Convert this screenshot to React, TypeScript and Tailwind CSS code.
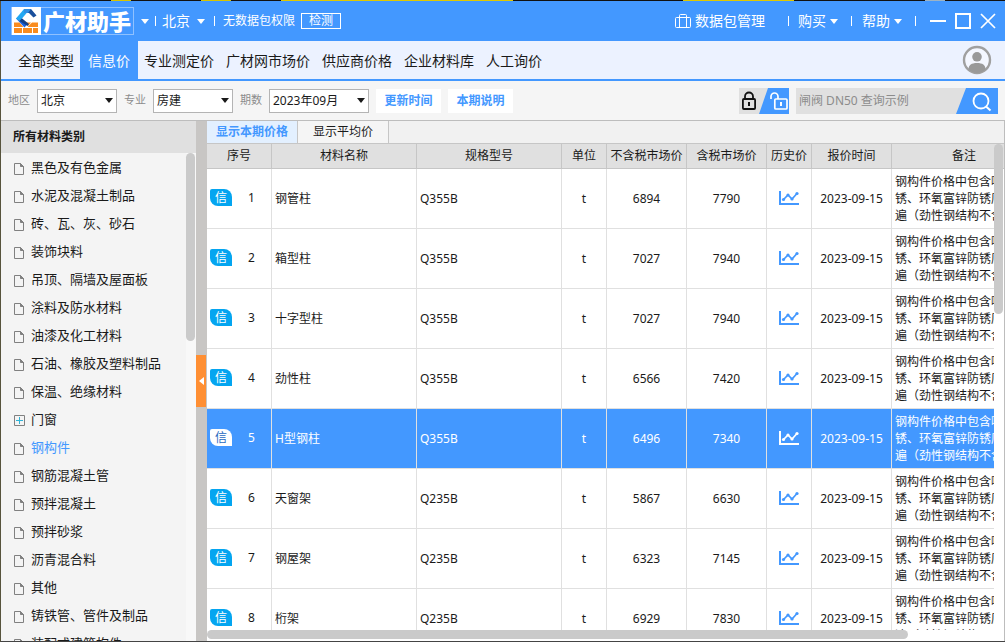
import { useState } from "react";

const categories = [
  "黑色及有色金属",
  "水泥及混凝土制品",
  "砖、瓦、灰、砂石",
  "装饰块料",
  "吊顶、隔墙及屋面板",
  "涂料及防水材料",
  "油漆及化工材料",
  "石油、橡胶及塑料制品",
  "保温、绝缘材料",
  "门窗",
  "钢构件",
  "钢筋混凝土管",
  "预拌混凝土",
  "预拌砂浆",
  "沥青混合料",
  "其他",
  "铸铁管、管件及制品",
  "装配式建筑构件",
];

const remark = "钢构件价格中包含喷砂除锈、环氧富锌防锈底漆两遍（劲性钢结构不含）";

const rows = [
  { id: 1, name: "钢管柱", spec: "Q355B", net: 6894, gross: 7790 },
  { id: 2, name: "箱型柱", spec: "Q355B", net: 7027, gross: 7940 },
  { id: 3, name: "十字型柱", spec: "Q355B", net: 7027, gross: 7940 },
  { id: 4, name: "劲性柱", spec: "Q355B", net: 6566, gross: 7420 },
  { id: 5, name: "H型钢柱", spec: "Q355B", net: 6496, gross: 7340 },
  { id: 6, name: "天窗架", spec: "Q235B", net: 5867, gross: 6630 },
  { id: 7, name: "钢屋架", spec: "Q235B", net: 6323, gross: 7145 },
  { id: 8, name: "桁架", spec: "Q235B", net: 6929, gross: 7830 },
];

const navItems = ["全部类型", "信息价", "专业测定价", "广材网市场价", "供应商价格", "企业材料库", "人工询价"];

const columns = ["序号", "材料名称", "规格型号", "单位", "不含税市场价", "含税市场价", "历史价", "报价时间", "备注"];

function Caret({ className = "" }: { className?: string }) {
  return (
    <svg width="8" height="5" viewBox="0 0 8 5" className={className} aria-hidden="true">
      <path d="M0 0h8L4 5z" fill="currentColor" />
    </svg>
  );
}

function Divider() {
  return <span className="h-2.5 w-px bg-white" />;
}

function Logo() {
  return (
    <svg width="29" height="28" viewBox="0 0 29 28" aria-hidden="true">
      <rect width="29" height="28" fill="#fff" />
      <path d="M2 15.500h5.500l4 4.500H2zM2 21h8v5H2zM11 21h9v5h-9zM21 21h5v5h-5zM20 15.500h6V20H15.500z" fill="#f98b1e" />
      <path d="M13.500 15.500h5.500l-3 3.500z" fill="#f98b1e" />
      <path d="M4 11.500l3.500-2.500 8 8-3 3.500z" fill="#1b62e0" />
      <path d="M12 2h6l-8 9.500L7.500 14 4 11.500z" fill="#22a8f2" />
      <path d="M12 2h7l5.500 6.500-3 2L17 6h-4z" fill="#1a4f9c" />
      <path d="M12 2h7l-3 4h-4z" fill="#2f8fe4" />
      <path d="M10 11.500l7 5.500-1.500 2-8-5z" fill="#123f86" />
    </svg>
  );
}

function FileIcon() {
  return (
    <svg width="11" height="13" viewBox="0 0 11 13" fill="none" stroke="#808080" aria-hidden="true">
      <path d="M.5 1.500h6l3 3v8h-9z" />
      <path d="M6.500 1.500v3h3z" fill="#808080" />
    </svg>
  );
}

function PlusIcon() {
  return (
    <svg width="11" height="11" viewBox="0 0 11 11" fill="none" aria-hidden="true">
      <path d="M.5.5h10v10H.5z" stroke="#808080" />
      <path d="M5.500 2v7M2 5.500h7" stroke="#2fb3d6" />
    </svg>
  );
}

function ChartIcon() {
  return (
    <svg width="20" height="15" viewBox="0 0 20 15" fill="none" stroke="currentColor" aria-hidden="true">
      <path d="M1 0v13h19" strokeWidth="2" />
      <path d="M4.500 8.500L9 4l4 4 5-5.500" strokeWidth="1.700" />
      <g fill="currentColor" stroke="none">
        <circle cx="4.500" cy="8.500" r="1.600" />
        <circle cx="9" cy="4" r="1.600" />
        <circle cx="13" cy="8" r="1.600" />
        <circle cx="18" cy="2.500" r="1.600" />
      </g>
    </svg>
  );
}

function Select({ label, options, width }: { label: string; options: string[]; width: string }) {
  return (
    <label className="flex items-center gap-[7px] text-[11px] text-[#8c8c8c]">
      {label}
      <span className={`relative flex ${width}`}>
        <select className="h-6 w-full appearance-none border border-[#b4b4b4] bg-white pr-4 pl-[3px] text-xs text-[#1a1a1a] outline-none">
          {options.map((o) => (
            <option key={o}>{o}</option>
          ))}
        </select>
        <Caret className="pointer-events-none absolute top-[9px] right-1 text-[#1a1a1a]" />
      </span>
    </label>
  );
}

function TitleBar() {
  return (
    <header className="flex h-10 shrink-0 items-center justify-between bg-[#4398ff] pr-[9px] pl-2.5 text-sm text-white">
      <div className="flex items-center">
        <div className="flex h-7 items-center border border-[#8fc1ff]">
          <Logo />
          <h1 className="px-0.5 text-[22px] leading-[26px] font-black">广材助手</h1>
        </div>
        <button type="button" aria-label="切换产品" className="mr-1.5 ml-[7px]">
          <Caret />
        </button>
        <Divider />
        <button type="button" className="mr-[9px] ml-1.5 flex items-center gap-[7px]">
          北京
          <Caret />
        </button>
        <Divider />
        <span className="ml-2 text-xs">无数据包权限</span>
        <button type="button" className="ml-1.5 flex h-4 items-center border border-white px-[7px] text-xs leading-3">
          检测
        </button>
      </div>
      <div className="flex items-center">
        <button type="button" className="mr-[23px] flex items-center gap-1">
          <svg width="16" height="16" viewBox="0 0 16 16" fill="none" stroke="#fff" aria-hidden="true">
            <rect x=".5" y="4.500" width="15" height="10" rx="1" />
            <path d="M4.500 14.500V2.500q0-1 1-1h5q1 0 1 1v12" />
          </svg>
          数据包管理
        </button>
        <Divider />
        <button type="button" className="mr-[13px] ml-[9px] flex items-center gap-1">
          购买
          <Caret />
        </button>
        <Divider />
        <button type="button" className="mr-[13px] ml-2.5 flex items-center gap-1">
          帮助
          <Caret />
        </button>
        <Divider />
        <div className="ml-3.5 flex items-center gap-[9px]">
          <button type="button" aria-label="最小化">
            <svg width="16" height="16" viewBox="0 0 16 16" fill="none" stroke="#fff" strokeWidth="2" aria-hidden="true">
              <path d="M0 8h16" />
            </svg>
          </button>
          <button type="button" aria-label="最大化">
            <svg width="16" height="16" viewBox="0 0 16 16" fill="none" stroke="#fff" strokeWidth="2" aria-hidden="true">
              <rect x="1" y="1" width="14" height="14" />
            </svg>
          </button>
          <button type="button" aria-label="关闭">
            <svg width="16" height="16" viewBox="0 0 16 16" fill="none" stroke="#fff" strokeWidth="1.700" aria-hidden="true">
              <path d="M1 1l14 14M15 1L1 15" />
            </svg>
          </button>
        </div>
      </div>
    </header>
  );
}

function NavBar() {
  return (
    <nav className="flex h-10 shrink-0 items-stretch justify-between border-b-2 border-[#4398ff] bg-[#ecf2ff] pr-[13px] pl-[11px] text-sm text-[#1a1a1a]">
      <div className="flex">
        {navItems.map((item) => (
          <a
            key={item}
            href="#"
            className={
              item === "信息价"
                ? "flex items-center bg-[#4398ff] px-2 pt-0.5 text-white"
                : "flex items-center px-1.5 pt-0.5"
            }
          >
            {item}
          </a>
        ))}
      </div>
      <button type="button" aria-label="用户" className="self-center">
        <svg width="30" height="30" viewBox="0 0 30 30" aria-hidden="true">
          <circle cx="15" cy="15" r="13" fill="#f4f7ff" stroke="#a0a0a0" strokeWidth="2.400" />
          <circle cx="15" cy="11.800" r="4.800" fill="#999" />
          <path d="M6.500 24.500c0-4.500 3-6.500 8.500-6.500s8.500 2 8.500 6.500A13 13 0 0 1 15 28a13 13 0 0 1-8.500-3.500z" fill="#999" />
        </svg>
      </button>
    </nav>
  );
}

function FilterBar() {
  return (
    <div className="flex h-10 shrink-0 items-center justify-between border-b border-[#bdbdbd] bg-[#f5f5f5] px-[7px] text-xs">
      <div className="flex items-center gap-[7px]">
        <Select label="地区" options={["北京"]} width="w-20" />
        <Select label="专业" options={["房建"]} width="w-20" />
        <Select label="期数" options={["2023年09月"]} width="w-[100px]" />
        <button type="button" className="h-6 w-[65px] bg-white font-bold text-[#4398ff]">
          更新时间
        </button>
        <button type="button" className="h-6 w-[65px] bg-white font-bold text-[#4398ff]">
          本期说明
        </button>
      </div>
      <div className="flex items-center gap-[7px]">
        <button type="button" aria-label="锁定">
          <svg width="50" height="26" viewBox="0 0 50 26" fill="none" aria-hidden="true">
            <rect width="50" height="26" fill="#e0e0e0" />
            <path d="M29 0h21v26H20z" fill="#4398ff" />
            <g stroke="#111" strokeWidth="1.800">
              <rect x="3.900" y="11" width="12.200" height="10" rx="1" />
              <path d="M6 11V8.500a4 4 0 0 1 8 0V11" />
              <path d="M10 14v4" strokeWidth="2" />
            </g>
            <g stroke="#fff" strokeWidth="1.700">
              <rect x="35.800" y="11" width="12.200" height="10" rx="1" />
              <path d="M32 11V8.500a3.500 3.500 0 0 1 7 0V11" />
              <path d="M42 14v4" strokeWidth="2" />
            </g>
          </svg>
        </button>
        <form className="flex h-[26px] bg-[#e0e0e0]" onSubmit={(e) => e.preventDefault()}>
          <input
            type="search"
            aria-label="搜索材料"
            placeholder="闸阀 DN50 查询示例"
            className="w-40 bg-transparent pl-[3px] outline-none placeholder:text-[#8c8c8c]"
          />
          <button type="submit" aria-label="搜索">
            <svg width="42" height="26" viewBox="0 0 42 26" fill="none" aria-hidden="true">
              <path d="M10 0h32v26H0z" fill="#4398ff" />
              <circle cx="25" cy="13" r="7.500" stroke="#fff" strokeWidth="1.800" />
              <path d="M30 18.500l4.500 4" stroke="#fff" strokeWidth="2" />
            </svg>
          </button>
        </form>
      </div>
    </div>
  );
}

function Sidebar() {
  return (
    <aside className="flex w-[195px] shrink-0 flex-col bg-[#f4f4f4]">
      <h2 className="flex h-8 shrink-0 items-center bg-[#e0e0e0] pl-3 text-xs font-bold text-[#1a1a1a]">所有材料类别</h2>
      <div className="relative min-h-0 flex-1 overflow-hidden pt-px">
        <ul className="text-[13px] text-[#1a1a1a]">
          {categories.map((c) => (
            <li key={c}>
              <a
                href="#"
                className={`flex h-7 items-center gap-1.5 pl-[13px] ${c === "钢构件" ? "text-[#4398ff]" : ""}`}
              >
                {c === "门窗" ? <PlusIcon /> : <FileIcon />}
                {c}
              </a>
            </li>
          ))}
        </ul>
        <div className="absolute inset-y-0 right-0 w-2.5 bg-[#f8f8f8]">
          <div className="h-[188px] w-[9px] rounded-full bg-[#cacaca]" />
        </div>
      </div>
    </aside>
  );
}

function PriceTable() {
  const [selected, setSelected] = useState(5);
  return (
    <table className="w-full min-w-[830px] table-fixed border-separate border-spacing-0 text-xs text-[#1a1a1a]">
      <colgroup>
        <col className="w-[65px]" />
        <col className="w-[145px]" />
        <col className="w-[145px]" />
        <col className="w-[45px]" />
        <col className="w-20" />
        <col className="w-20" />
        <col className="w-[45px]" />
        <col className="w-20" />
        <col />
      </colgroup>
      <thead>
        <tr className="h-[25px]">
          {columns.map((c) => (
            <th
              key={c}
              scope="col"
              className="border-r border-b border-[#c6c6c6] bg-[#e0e0e0] p-0 font-normal whitespace-nowrap"
            >
              {c}
            </th>
          ))}
        </tr>
      </thead>
      <tbody>
        {rows.map((r) => {
          const active = r.id === selected;
          return (
            <tr
              key={r.id}
              onClick={() => setSelected(r.id)}
              className={`h-[60px] text-center *:border-r *:border-b *:border-[#e0e0e0] *:p-0 ${
                active ? "bg-[#4398ff] text-white" : "bg-white"
              }`}
            >
              <td>
                <div className="flex items-center pb-0.5 pl-[3px]">
                  <span
                    className={`flex h-[17px] w-[22px] items-center justify-center rounded-tl-xs rounded-tr-lg rounded-bl-lg ${
                      active ? "bg-white text-[#2a6bbf]" : "bg-[#04a5f0] text-white"
                    }`}
                  >
                    信
                  </span>
                  <span className="flex-1">{r.id}</span>
                </div>
              </td>
              <td className="text-left">
                <span className="pl-[3px]">{r.name}</span>
              </td>
              <td className="text-left">
                <span className="pl-[3px]">{r.spec}</span>
              </td>
              <td>t</td>
              <td>{r.net}</td>
              <td>{r.gross}</td>
              <td>
                <button
                  type="button"
                  aria-label="历史价"
                  className={`flex w-full justify-center ${active ? "text-white" : "text-[#4398ff]"}`}
                >
                  <ChartIcon />
                </button>
              </td>
              <td className="whitespace-nowrap">2023-09-15</td>
              <td className="text-left">
                <p className="line-clamp-3 px-[3px] leading-[17px]">{remark}</p>
              </td>
            </tr>
          );
        })}
      </tbody>
    </table>
  );
}

export default function App() {
  return (
    <div className="flex h-screen flex-col overflow-hidden bg-white font-['Noto_Sans','Noto_Sans_CJK_SC',sans-serif]">
      <div className="h-px shrink-0 bg-[linear-gradient(90deg,#111_0_11%,#d9c400_11%_13%,#111_13%_20%,#d9c400_20%_23%,#111_23%_28%,#e0c800_28%_51%,#111_51%_68%,#e0c800_68%_79%,#111_79%_92%,#9db3c4_92%_94%,#111_94%)]" />
      <div className="flex min-h-0 flex-1 flex-col border-b border-l border-b-[#444] border-l-[#57533c]">
        <TitleBar />
        <NavBar />
        <FilterBar />
        <div className="flex min-h-0 flex-1">
          <Sidebar />
          <div className="flex w-[11px] shrink-0 items-center bg-[#c8c6c4]">
            <button
              type="button"
              aria-label="收起侧栏"
              className="flex h-[52px] w-2.5 items-center justify-center bg-[#ff8f33]"
            >
              <svg width="5" height="8" viewBox="0 0 5 8" aria-hidden="true">
                <path d="M5 0v8L0 4z" fill="#fff" />
              </svg>
            </button>
          </div>
          <main className="flex min-w-0 flex-1 flex-col border-r border-[#bdbdbd]">
            <div className="flex h-[23px] shrink-0 border-b border-[#c6c6c6] bg-[#f1f1f1] text-xs">
              <button type="button" className="border-r border-[#c6c6c6] bg-[#e3f0ff] px-[9px] font-bold text-[#4398ff]">
                显示本期价格
              </button>
              <button type="button" className="border-r border-[#c6c6c6] bg-[#f5f5f5] px-[15px] text-[#1a1a1a]">
                显示平均价
              </button>
            </div>
            <div className="relative min-h-0 flex-1 overflow-hidden">
              <PriceTable />
              <div className="absolute top-[25px] right-0 bottom-0 w-2.5 bg-white" />
              <div className="absolute top-0 right-0 h-[170px] w-2.5 pr-px">
                <div className="h-full rounded-full bg-[#cacaca]" />
              </div>
              <div className="absolute inset-x-0 bottom-0 h-[11px] bg-white">
                <div className="h-[9px] w-[88%] rounded-full bg-[#cacaca]" />
              </div>
            </div>
          </main>
        </div>
      </div>
    </div>
  );
}
